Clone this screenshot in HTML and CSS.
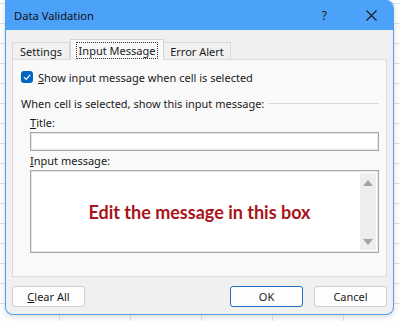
FILE: index.html
```html
<!DOCTYPE html>
<html>
<head>
    <title>Data Validation</title>
    <link rel="stylesheet" href="styles.css">
</head>
<body>
    <div class="dialog">
        <div class="titlebar">
            <span class="title">Data Validation</span>
            <span class="help">?</span>
            <svg class="close" width="11" height="11" viewBox="0 0 11 11">
                <path d="M0.5 0.5 L10.5 10.5 M10.5 0.5 L0.5 10.5" stroke="#1a1a1a" stroke-width="1.1" fill="none"/>
            </svg>
        </div>

        <div class="content">
            <div class="tabs">
                <div class="tab settings">Settings</div>
                <div class="tab active"><span class="focus">Input Message</span></div>
                <div class="tab alert">Error Alert</div>
            </div>

            <div class="panel">
                <label class="check-row">
                    <span class="checkbox">
                        <svg width="12" height="12" viewBox="0 0 12 12">
                            <path d="M3 6.2 L5.2 8.4 L9.2 3.8" stroke="white" stroke-width="1.2" fill="none"/>
                        </svg>
                    </span>
                    <span><u>S</u>how input message when cell is selected</span>
                </label>

                <div class="group-title">
                    <span>When cell is selected, show this input message:</span>
                    <span class="rule"></span>
                </div>

                <div class="field">
                    <div class="label"><u>T</u>itle:</div>
                    <div class="textbox"></div>
                    <div class="label second"><u>I</u>nput message:</div>
                    <div class="textarea">
                        <div class="message">Edit the message in this box</div>
                        <div class="scrollbar">
                            <span class="arrow up"></span>
                            <span class="arrow down"></span>
                        </div>
                    </div>
                </div>
            </div>

            <div class="buttons">
                <button><u>C</u>lear All</button>
                <span class="spacer"></span>
                <button class="default">OK</button>
                <button>Cancel</button>
            </div>
        </div>
    </div>
</body>
</html>
```

FILE: styles.css
```css
* {
    box-sizing: border-box;
}
body {
    margin: 0;
    height: 321px;
    overflow: hidden;
    font-family: "Noto Sans", sans-serif;
    font-size: 11px;
    color: #1a1a1a;
    background-color: #ffffff;
    background-image:
        linear-gradient(to bottom, #e2e2e2 1px, transparent 1px),
        linear-gradient(to right, #e2e2e2 1px, transparent 1px);
    background-size: 100% 20px, 71px 100%;
    background-position: 0 3px, 59px 0;
}
.dialog {
    margin-left: 5px;
    width: 389px;
    height: 315px;
    border: 1px solid #4a9ff5;
    border-top: none;
    border-radius: 0 8px 8px 8px;
    background: #f0f0f0;
    overflow: hidden;
    box-shadow: 0 2px 6px rgba(0,0,0,0.15);
}
.titlebar {
    height: 30px;
    background: #4ca2f9;
    display: flex;
    align-items: center;
    padding: 0 0 0 8px;
}
.title {
    flex: 1;
    font-size: 11.2px;
    color: #111;
}
.help {
    font-size: 12px;
    margin-right: 39px;
}
.close {
    margin-right: 16px;
}
.content {
    padding: 8px 6px 0 6px;
}
.tabs {
    display: flex;
    align-items: flex-end;
    height: 21px;
    position: relative;
    z-index: 1;
}
.tab {
    height: 17px;
    line-height: 17px;
    text-align: center;
    border: 1px solid #d9d9d9;
    border-bottom: none;
    background: #f0f0f0;
}
.tab.settings {
    width: 58px;
}
.tab.active {
    width: 94px;
    height: 21px;
    line-height: 21px;
    background: #f9f9f9;
    border-color: #d4d4d4;
    margin-bottom: -1px;
}
.tab.alert {
    width: 67px;
    border-left: none;
}
.focus {
    display: inline-block;
    line-height: 15px;
    padding: 0 2px;
    outline: 1px dotted #333;
}
.panel {
    height: 218px;
    border: 1px solid #dcdcdc;
    background: #f9f9f9;
    padding: 10px 7px 0 8px;
}
.check-row {
    display: flex;
    align-items: center;
    gap: 5px;
    height: 14px;
}
.checkbox {
    width: 12px;
    height: 12px;
    border-radius: 3px;
    background: #0067c0;
    display: flex;
}
.group-title {
    display: flex;
    align-items: center;
    gap: 4px;
    height: 16px;
    margin-top: 11px;
}
.rule {
    flex: 1;
    height: 1px;
    background: #dadada;
}
.field {
    padding-left: 9px;
}
.label {
    margin-top: 4px;
    height: 16px;
    line-height: 16px;
}
.label.second {
    margin-top: 2px;
}
.textbox {
    height: 19px;
    margin-top: 1px;
    border: 1px solid #a9a9a9;
    box-shadow: inset 0 0 0 1px #e6e6e6;
    background: #fff;
}
.textarea {
    height: 83px;
    margin-top: 1px;
    border: 1px solid #a9a9a9;
    box-shadow: inset 0 0 0 1px #e6e6e6;
    background: #fff;
    display: flex;
    padding: 2px;
}
.message {
    flex: 1;
    display: flex;
    align-items: center;
    justify-content: center;
    padding-left: 6px;
    font-family: Lato, sans-serif;
    font-weight: 700;
    font-size: 18px;
    color: #a8141a;
}
.scrollbar {
    width: 16px;
    background: #eeeeee;
    display: flex;
    flex-direction: column;
    justify-content: space-between;
    align-items: center;
    padding: 7px 0 5px;
}
.arrow {
    width: 0;
    height: 0;
    border-left: 5px solid transparent;
    border-right: 5px solid transparent;
}
.arrow.up {
    border-bottom: 6px solid #a3a3a3;
}
.arrow.down {
    border-top: 6px solid #a3a3a3;
}
.buttons {
    display: flex;
    gap: 11px;
    margin-top: 9px;
}
.spacer {
    flex: 1;
}
button {
    width: 73px;
    height: 21px;
    padding: 0;
    font-family: "Noto Sans", sans-serif;
    font-size: 11px;
    color: #1a1a1a;
    background: #fdfdfd;
    border: 1px solid #cfcfcf;
    border-radius: 3px;
}
button.default {
    border-color: #1f6fc4;
}
```
